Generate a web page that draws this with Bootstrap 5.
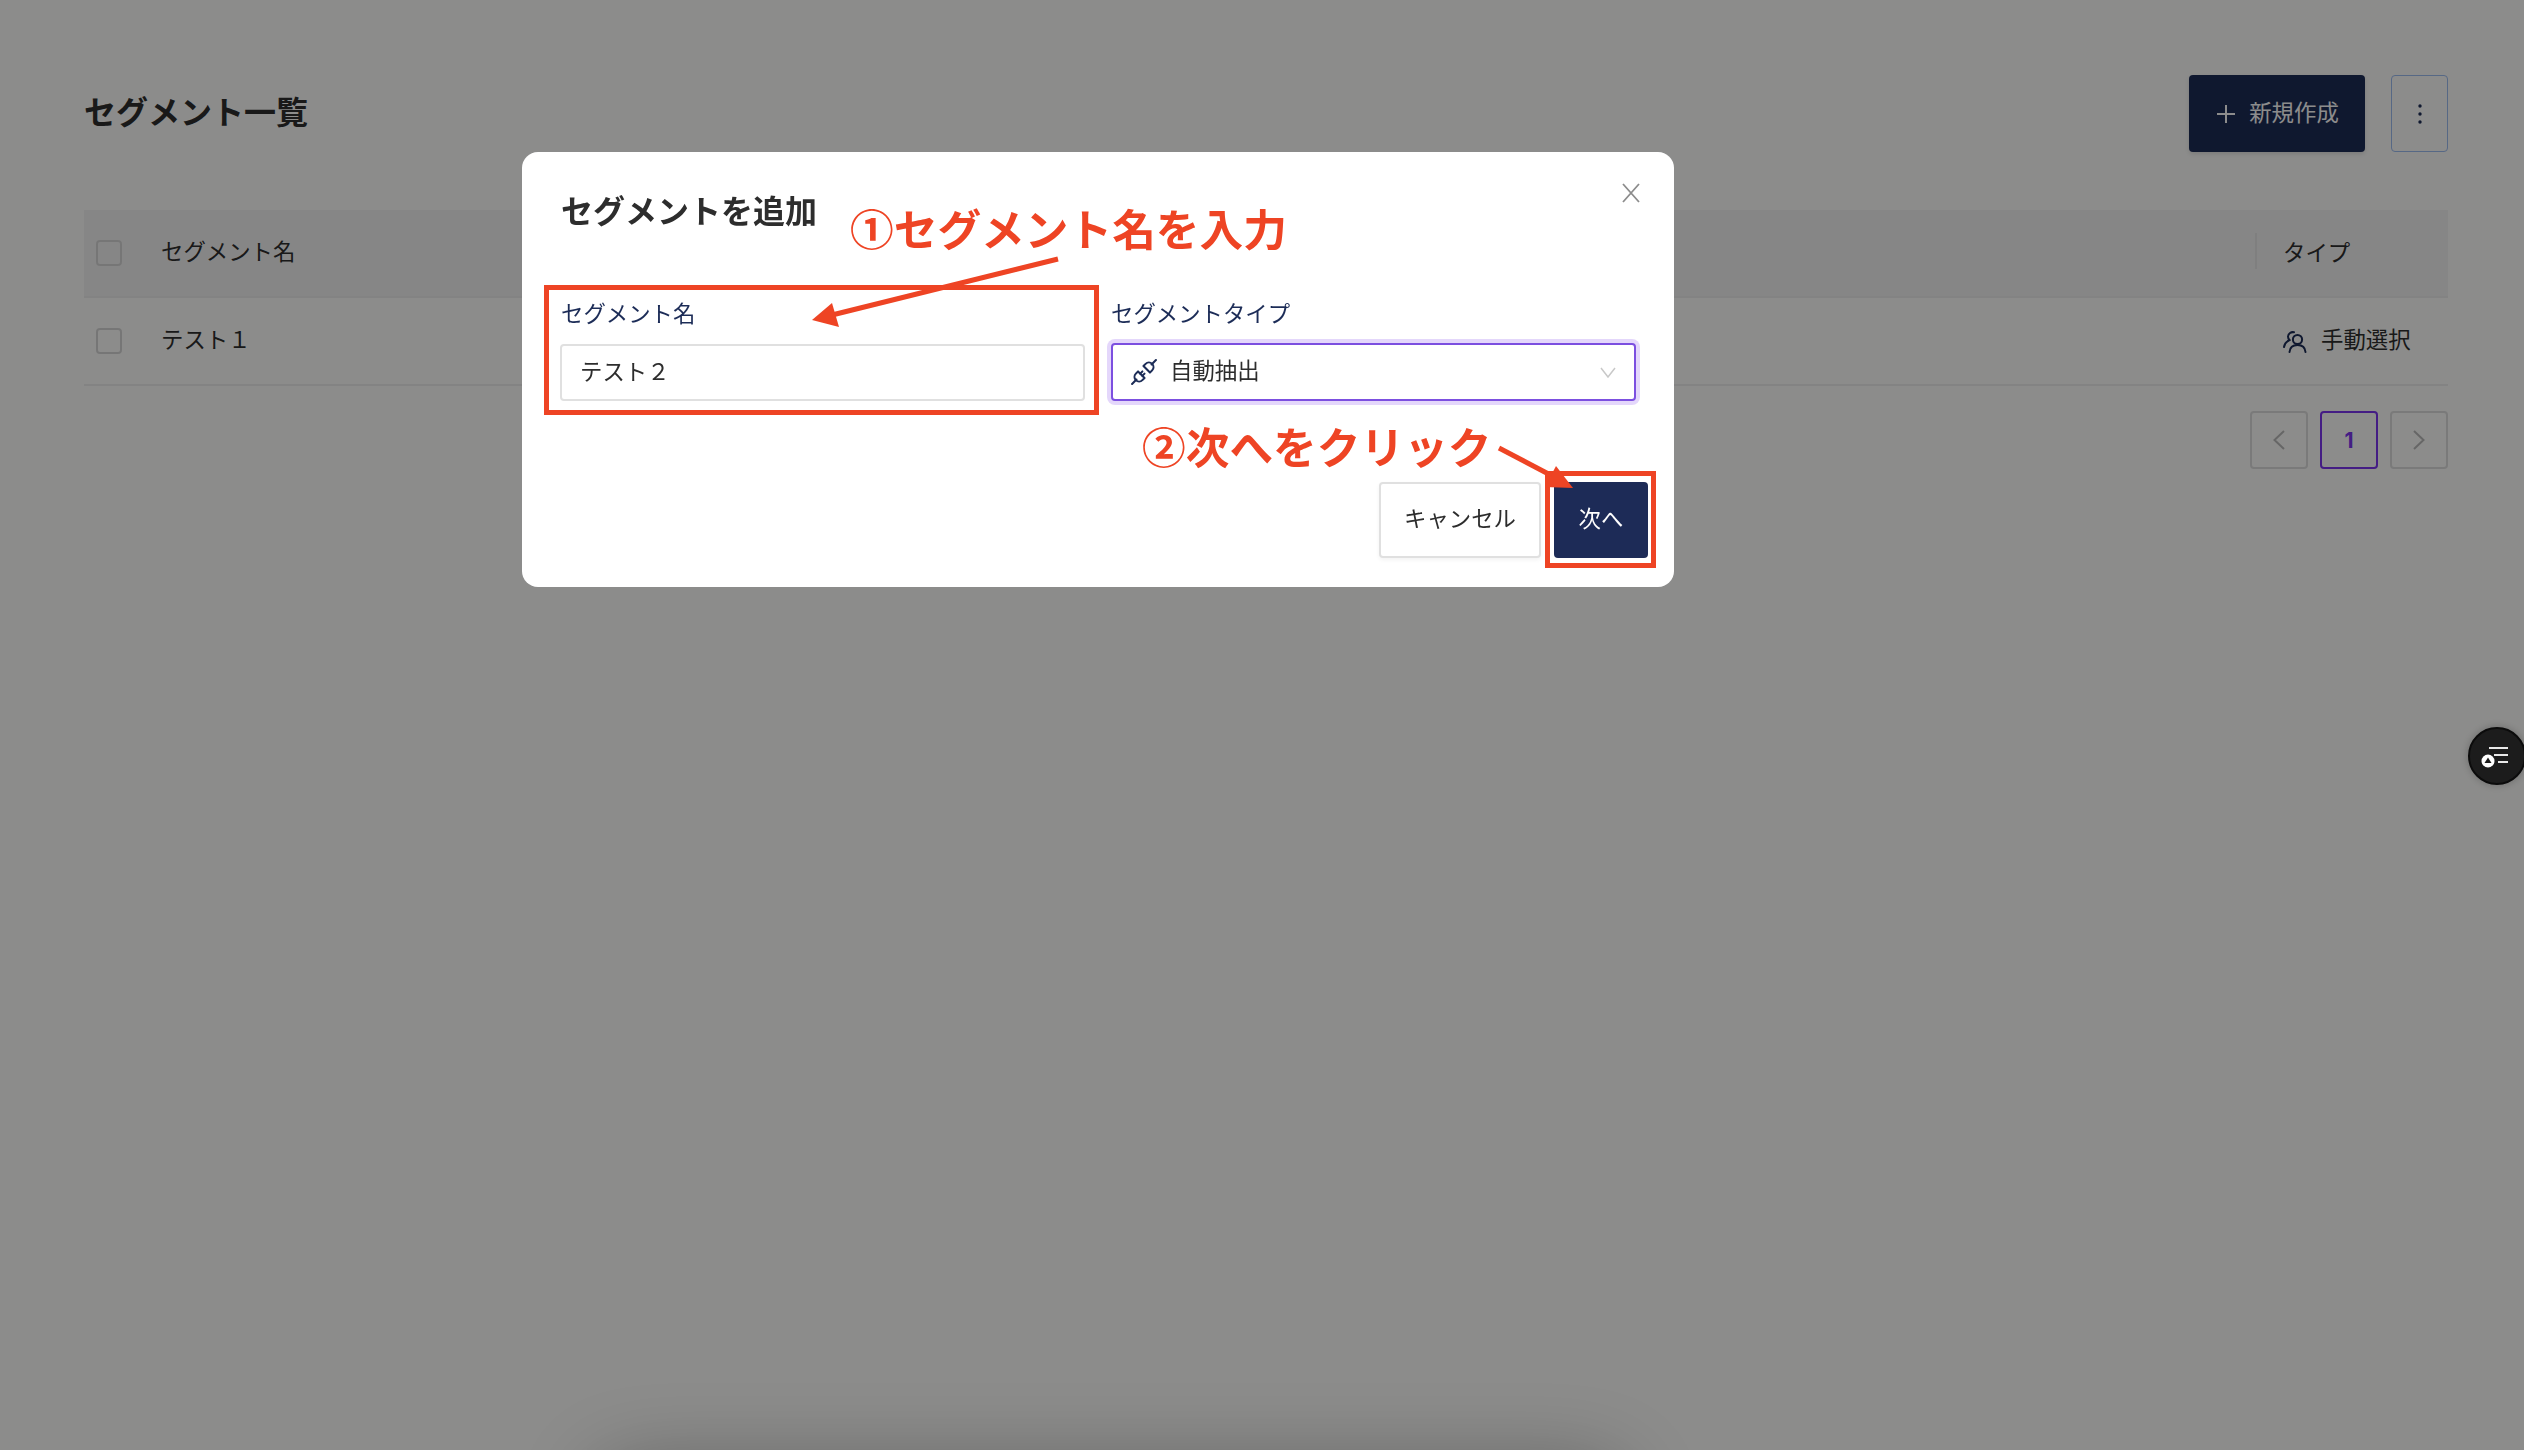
<!DOCTYPE html>
<html lang="ja">
<head>
<meta charset="utf-8">
<title>セグメント一覧</title>
<link href="https://cdn.jsdelivr.net/npm/bootstrap@5.3.0/dist/css/bootstrap.min.css" rel="stylesheet">
<style>
html,body{height:100%;overflow:hidden}
body{background:#fffffd;font-family:"Noto Sans CJK JP","Noto Sans",sans-serif;font-size:22.4px;color:#2d2d2d}
.pagewrap{padding:75px 76px 0 84px}
.pagetitle{font-size:32px;font-weight:700;line-height:48px;margin:0;padding-bottom:8px;color:#2f2f2f}
.btn-new{width:176px;height:77px;padding:0 0 4px 2px;background:#1c2c57;color:#fff;border:0;border-radius:4px;font-size:22.4px;gap:14px;box-shadow:0 2px 4px rgba(0,0,0,.12)}
.btn-new svg{margin-top:4px}
.btn-new:hover{background:#1c2c57;color:#fff}
.btn-kebab{width:57px;height:77px;padding:0;border:1.500px solid #9dbdf2;border-radius:4px;background:transparent}
.btn-gap{gap:26px}
.segtable{margin-top:58px;table-layout:fixed;width:100%;--bs-table-bg:transparent}
.segtable th,.segtable td{padding:0 0 5px;vertical-align:middle;font-weight:400;font-size:22.4px;color:#2f2f2f;border-bottom:2px solid #eeeeee}
.segtable thead th{height:87px;background:#f5f5f5}
.segtable tbody td{height:88px}
.col-chk{width:77px}
.col-type{width:193px}
.chk-box{width:26px;height:26px;margin:5px 0 0 12px;background:transparent;border:2px solid #d8d8d8;border-radius:4px;display:block}
.type-sep{height:36px;padding-left:26px;border-left:2px solid #e8e8e8;line-height:36px;margin-top:5px;position:relative;top:-2px}
.type-cell{padding-left:28px;gap:14px}
.type-cell svg{margin-top:5px}
.pager{margin-top:25px;gap:12px;--bs-pagination-border-radius:4px}
.pager .page-link{width:58px;height:58px;padding:0;display:flex;align-items:center;justify-content:center;background:transparent;border:2px solid #dedede;border-radius:4px!important;margin:0!important}
.pager .page-item.active .page-link{border-color:#7c35f0;color:#7c35f0;font:700 21px Inter,"Liberation Sans",sans-serif}
.modal-backdrop{--bs-backdrop-opacity:.45}
.segmodal .modal-dialog{max-width:1152px;width:1152px;margin:152px 0 0 522px}
.segmodal .modal-content{border:0;border-radius:16px;position:relative;--bs-modal-bg:#fff}
.segmodal .modal-header{padding:33px 40px 2px;border:0}
.modal-ttl{font-size:32px;font-weight:700;line-height:48px;color:#2d2d2d;margin:0 0 0 -1px}
.close-x{position:absolute;left:1100px;top:31px;width:18px;height:20px;padding:0;border:0;background:none;display:block}
.segmodal .modal-body{padding:61px 38px 0;gap:26px}
.fieldbox{flex:1 1 0;min-width:0}
.fieldlabel{display:block;font-size:22.4px;line-height:33px;font-weight:400;color:#1c2c57;margin:0 0 15px 1px}
.fieldlabel2{margin-left:0}
.txtinput{height:57px;margin-top:0;border:2px solid #e0e0e0;border-radius:4px;padding:0 18px 5px;font-size:22.4px;color:#2d2d2d;line-height:1}
.selbox{height:58px;margin-top:-1px;padding:0 18px;background-image:none;border:2px solid #7c4fe0;border-radius:4px;box-shadow:0 0 0 4px #e4d7fb;font-size:22.4px;line-height:1;color:#2d2d2d;gap:13px}
.selbox .flex-grow-1{padding-bottom:6px}
.segmodal .modal-footer{padding:81px 26px 29px 0;border:0;gap:13px}
.segmodal .modal-footer>*{margin:0}
.btn-cancel{width:162px;height:76px;padding:0 0 5px;background:#fff;border:2px solid #e0e0e0;border-radius:4px;font-size:22.4px;color:#2d2d2d;box-shadow:0 2px 4px rgba(0,0,0,.05)}
.btn-next{width:94px;height:76px;padding:0 0 5px;background:#1d2b57;border:0;border-radius:4px;font-size:22.4px;color:#fff}
.notelayer{position:fixed;inset:0;z-index:1060;pointer-events:none}
.notelayer svg{position:absolute;left:0;top:0}
.notetext{position:absolute;font-size:43.7px;line-height:1;font-weight:700;color:#ee4424;white-space:nowrap}
.note-one{left:850px;top:206px}
.note-two{left:1142px;top:424px}
.redframe{position:absolute;border:5px solid #ee4424}
.frame-one{left:544px;top:285px;width:555px;height:130px}
.frame-two{left:1545px;top:471px;width:111px;height:97px}
.floatbtn{position:fixed;left:2468px;top:727px;width:58px;height:58px;border-radius:50%;background:#1c1c1c;border:2px solid #0b0b0b;box-shadow:0 0 8px rgba(0,0,0,.25);z-index:1060;padding:0}
.bottomglow{position:fixed;left:620px;top:1490px;width:980px;height:60px;background:#000;box-shadow:0 0 90px 20px rgba(0,0,0,.34)}
</style>
</head>
<body>
<div class="pagewrap">
  <div class="d-flex justify-content-between align-items-center">
    <h1 class="pagetitle">セグメント一覧</h1>
    <div class="d-flex btn-gap">
      <button class="btn btn-new d-flex align-items-center justify-content-center" type="button">
        <svg width="18" height="18" viewBox="0 0 18 18"><path d="M9 0v18M0 9h18" stroke="#fff" stroke-width="2" fill="none"/></svg>
        <span>新規作成</span>
      </button>
      <button class="btn btn-kebab d-flex align-items-center justify-content-center" type="button" aria-label="menu">
        <svg width="6" height="22" viewBox="0 0 6 22"><circle cx="3" cy="3" r="1.700" fill="#1c2c57"/><circle cx="3" cy="11" r="1.700" fill="#1c2c57"/><circle cx="3" cy="19" r="1.700" fill="#1c2c57"/></svg>
      </button>
    </div>
  </div>
  <table class="table segtable mb-0">
    <thead>
      <tr>
        <th class="col-chk"><span class="chk-box"></span></th>
        <th>セグメント名</th>
        <th class="col-type"><div class="type-sep">タイプ</div></th>
      </tr>
    </thead>
    <tbody>
      <tr>
        <td><span class="chk-box"></span></td>
        <td>テスト１</td>
        <td>
          <div class="d-flex align-items-center type-cell">
            <svg width="24" height="24" viewBox="0 0 24 24" fill="none" stroke="#1c2c57" stroke-width="2" stroke-linecap="round"><circle cx="14.500" cy="10.500" r="4.600"/><path d="M6.500 23c.4-4.600 3.600-7 8-7s7.600 2.400 8 7"/><path d="M11 3.300A4.800 4.800 0 0 0 5 7.500c0 1.500.6 2.600 1.500 3.500C3.500 12.500 1.500 14.500 1 18"/></svg>
            <span>手動選択</span>
          </div>
        </td>
      </tr>
    </tbody>
  </table>
  <ul class="pagination pager justify-content-end mb-0">
    <li class="page-item"><a class="page-link" href="#" aria-label="前へ"><svg width="12" height="20" viewBox="0 0 12 20"><path d="M11 1 1.500 10 11 19" stroke="#bbb" stroke-width="2" fill="none"/></svg></a></li>
    <li class="page-item active"><a class="page-link" href="#">1</a></li>
    <li class="page-item"><a class="page-link" href="#" aria-label="次へ"><svg width="12" height="20" viewBox="0 0 12 20"><path d="M1 1 10.500 10 1 19" stroke="#bbb" stroke-width="2" fill="none"/></svg></a></li>
  </ul>
</div>
<div class="bottomglow"></div>
<div class="modal-backdrop show"></div>
<div class="modal segmodal d-block" role="dialog">
  <div class="modal-dialog">
    <div class="modal-content">
      <div class="modal-header">
        <h2 class="modal-ttl">セグメントを追加</h2>
      </div>
      <button class="close-x" type="button" aria-label="閉じる"><svg width="18" height="20" viewBox="0 0 18 20" style="display:block"><path d="M1 1l16 18M17 1 1 19" stroke="#8c8c8c" stroke-width="1.800" fill="none"/></svg></button>
      <div class="modal-body d-flex">
        <div class="fieldbox">
          <label class="fieldlabel">セグメント名</label>
          <input class="form-control txtinput" type="text" value="テスト２">
        </div>
        <div class="fieldbox">
          <label class="fieldlabel fieldlabel2">セグメントタイプ</label>
          <div class="form-select selbox d-flex align-items-center">
            <svg width="26" height="26" viewBox="0 0 24 24" fill="none" stroke="#1c2c57" stroke-width="1.900" stroke-linecap="round" stroke-linejoin="round"><path d="M1 23l4-4M23 1l-4 4"/><path d="M6.500 11.500l6 6-2 2a4 4 0 0 1-6-6z"/><path d="M11.500 6.500l6 6 2-2a4 4 0 0 0-6-6z"/><path d="M8.500 13.500l2-2M10.500 15.500l2-2"/></svg>
            <span class="flex-grow-1">自動抽出</span>
            <svg width="16" height="11" viewBox="0 0 16 11"><path d="M1 1l7 9 7-9" stroke="#c8c8c8" stroke-width="1.500" fill="none"/></svg>
          </div>
        </div>
      </div>
      <div class="modal-footer">
        <button class="btn btn-cancel" type="button">キャンセル</button>
        <button class="btn btn-next" type="button">次へ</button>
      </div>
    </div>
  </div>
</div>
<div class="notelayer">
  <div class="redframe frame-one"></div>
  <div class="redframe frame-two"></div>
  <svg width="2524" height="1450" viewBox="0 0 2524 1450">
    <path d="M1058 259 832 315" stroke="#ee4424" stroke-width="5" fill="none"/>
    <polygon points="812,320 832,303 839,327" fill="#ee4424"/>
    <path d="M1499 448 1560 480" stroke="#ee4424" stroke-width="5" fill="none"/>
    <polygon points="1556,466 1573,488 1545,487" fill="#ee4424"/>
  </svg>
  <span class="notetext note-one">①セグメント名を入力</span>
  <span class="notetext note-two">②次へをクリック</span>
</div>
<button class="floatbtn" type="button" aria-label="checklist">
  <svg width="54" height="54" viewBox="0 0 54 54" style="display:block"><path d="M19 19h19M24 26h14M28 33h10" stroke="#e8e8e8" stroke-width="2.200" fill="none"/><circle cx="18" cy="32" r="6.500" fill="#fff"/><path d="M18 28.500l3.500 5.500h-7z" fill="#1c1c1c"/></svg>
</button>
<script src="https://cdn.jsdelivr.net/npm/bootstrap@5.3.0/dist/js/bootstrap.bundle.min.js"></script>
</body>
</html>
